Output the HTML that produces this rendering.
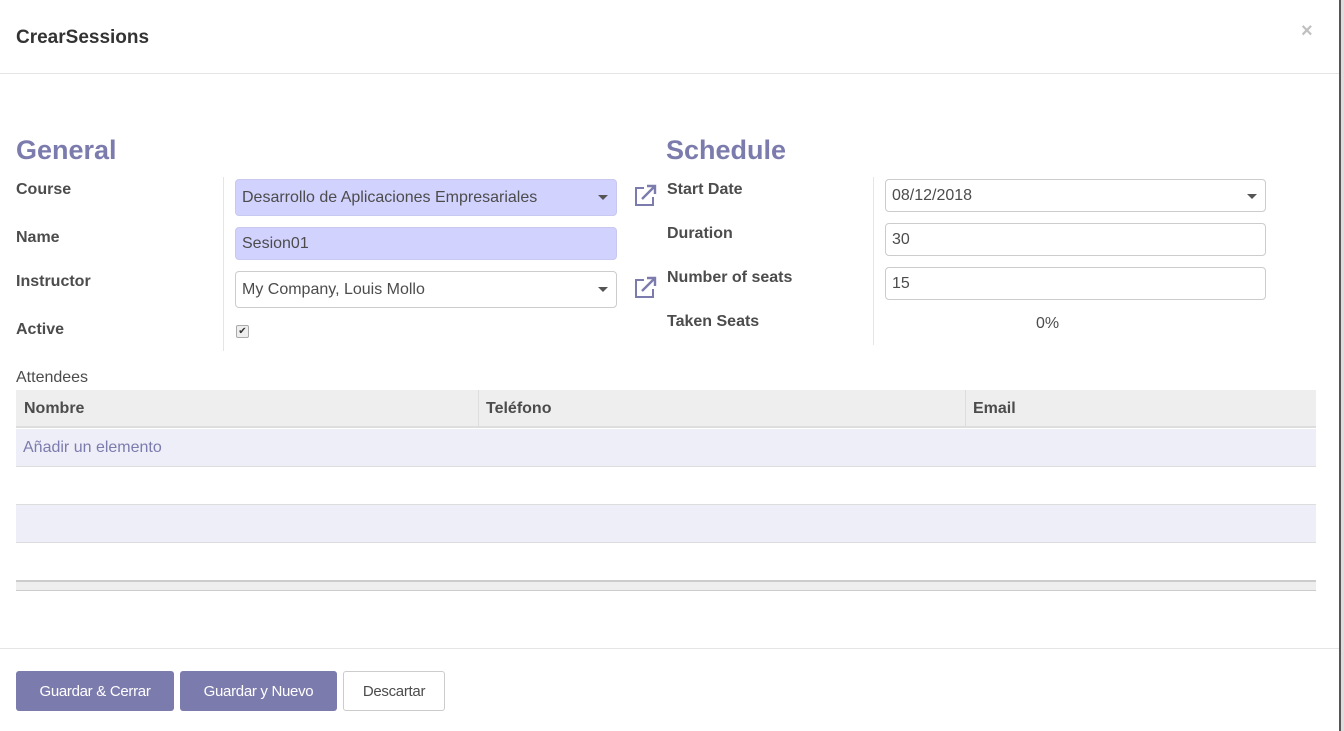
<!DOCTYPE html>
<html><head><meta charset="utf-8"><style>
*{box-sizing:border-box;margin:0;padding:0}
body{width:1344px;height:731px;background:#fff;font-family:"Liberation Sans",Arial,sans-serif;color:#4c4c4c;position:relative;overflow:hidden;font-size:16px}
.a{position:absolute}
.lbl{font-weight:bold;color:#4c4c4c;font-size:16px}
.inp{position:absolute;border:1px solid #ccc;border-radius:4px;height:33px;padding:0 6px;line-height:32px;font-size:16px;color:#4c4c4c}
.req{background:#d2d2ff;border-color:#c8c8f0}
.caret{position:absolute;right:8px;top:14px;width:0;height:0;border-left:5px solid transparent;border-right:5px solid transparent;border-top:5px solid #555}
.h{font-size:27px;font-weight:bold;color:#7c7bad}
.btn{position:absolute;top:671px;height:40px;border-radius:3px;font-size:15px;line-height:41px;text-align:center;letter-spacing:-0.3px}
</style></head><body>
<div class="a" style="left:16px;top:27px;font-size:19px;font-weight:bold;color:#333">CrearSessions</div>
<div class="a" style="left:1301px;top:20px;font-size:20px;font-weight:bold;color:#c0c0c0">×</div>
<div class="a" style="left:0;top:73px;width:1339px;height:1px;background:#e5e5e5"></div>
<div class="a" style="left:1339px;top:0;width:2px;height:731px;background:#555"></div>
<div class="a" style="left:1341px;top:0;width:3px;height:731px;background:#ddd"></div>

<div class="a h" style="left:16px;top:135px">General</div>
<div class="a h" style="left:666px;top:135px">Schedule</div>

<div class="a lbl" style="left:16px;top:181px">Course</div>
<div class="a lbl" style="left:16px;top:229px">Name</div>
<div class="a lbl" style="left:16px;top:273px">Instructor</div>
<div class="a lbl" style="left:16px;top:321px">Active</div>
<div class="a" style="left:223px;top:177px;width:1px;height:174px;background:#e5e5e5"></div>

<div class="inp req" style="left:235px;top:179px;width:382px;height:37px;line-height:36px">Desarrollo de Aplicaciones Empresariales<span class="caret" style="top:15px"></span></div>
<div class="inp req" style="left:235px;top:227px;width:382px">Sesion01</div>
<div class="inp" style="left:235px;top:271px;width:382px;height:37px;line-height:36px">My Company, Louis Mollo<span class="caret" style="top:15px"></span></div>
<div class="a" style="left:236px;top:325px;width:13px;height:13px;border:1px solid #aaa;border-radius:2px;background:#eee;font-size:10px;line-height:11px;text-align:center;color:#333">✔</div>

<svg class="a" style="left:633px;top:184px" width="26" height="24" viewBox="0 0 26 24"><path d="M11 4H3v17h17v-8" fill="none" stroke="#7c7bad" stroke-width="2"/><path d="M9 15L22 2M14 2h8v8" fill="none" stroke="#7c7bad" stroke-width="2.4"/></svg>
<svg class="a" style="left:633px;top:276px" width="26" height="24" viewBox="0 0 26 24"><path d="M11 4H3v17h17v-8" fill="none" stroke="#7c7bad" stroke-width="2"/><path d="M9 15L22 2M14 2h8v8" fill="none" stroke="#7c7bad" stroke-width="2.4"/></svg>

<div class="a lbl" style="left:667px;top:181px">Start Date</div>
<div class="a lbl" style="left:667px;top:225px">Duration</div>
<div class="a lbl" style="left:667px;top:269px">Number of seats</div>
<div class="a lbl" style="left:667px;top:313px">Taken Seats</div>
<div class="a" style="left:873px;top:177px;width:1px;height:168px;background:#e5e5e5"></div>
<div class="inp" style="left:885px;top:179px;width:381px">08/12/2018<span class="caret"></span></div>
<div class="inp" style="left:885px;top:223px;width:381px">30</div>
<div class="inp" style="left:885px;top:267px;width:381px">15</div>
<div class="a" style="left:1036px;top:315px;font-size:16px">0%</div>

<div class="a" style="left:16px;top:369px;font-size:16px">Attendees</div>
<div class="a" style="left:16px;top:390px;width:1300px;height:38px;background:#eee;border-bottom:2px solid #ddd"></div>
<div class="a" style="left:478px;top:390px;width:1px;height:38px;background:#ddd"></div>
<div class="a" style="left:965px;top:390px;width:1px;height:38px;background:#ddd"></div>
<div class="a lbl" style="left:24px;top:400px">Nombre</div>
<div class="a lbl" style="left:486px;top:400px">Teléfono</div>
<div class="a lbl" style="left:973px;top:400px">Email</div>
<div class="a" style="left:16px;top:429px;width:1300px;height:38px;background:#eeeef8;border-bottom:1px solid #ddd"></div>
<div class="a" style="left:23px;top:439px;color:#7c7bad">Añadir un elemento</div>
<div class="a" style="left:16px;top:467px;width:1300px;height:38px;background:#fff;border-bottom:1px solid #ddd"></div>
<div class="a" style="left:16px;top:505px;width:1300px;height:38px;background:#eeeef8;border-bottom:1px solid #ddd"></div>
<div class="a" style="left:16px;top:580px;width:1300px;height:11px;background:#eee;border-top:2px solid #ccc;border-bottom:1px solid #ccc"></div>

<div class="a" style="left:0;top:648px;width:1339px;height:1px;background:#e5e5e5"></div>
<div class="btn" style="left:16px;width:158px;background:#7c7bad;color:#fff">Guardar &amp; Cerrar</div>
<div class="btn" style="left:180px;width:157px;background:#7c7bad;color:#fff">Guardar y Nuevo</div>
<div class="btn" style="left:343px;width:102px;border:1px solid #ccc;color:#4c4c4c;line-height:39px">Descartar</div>
</body></html>
